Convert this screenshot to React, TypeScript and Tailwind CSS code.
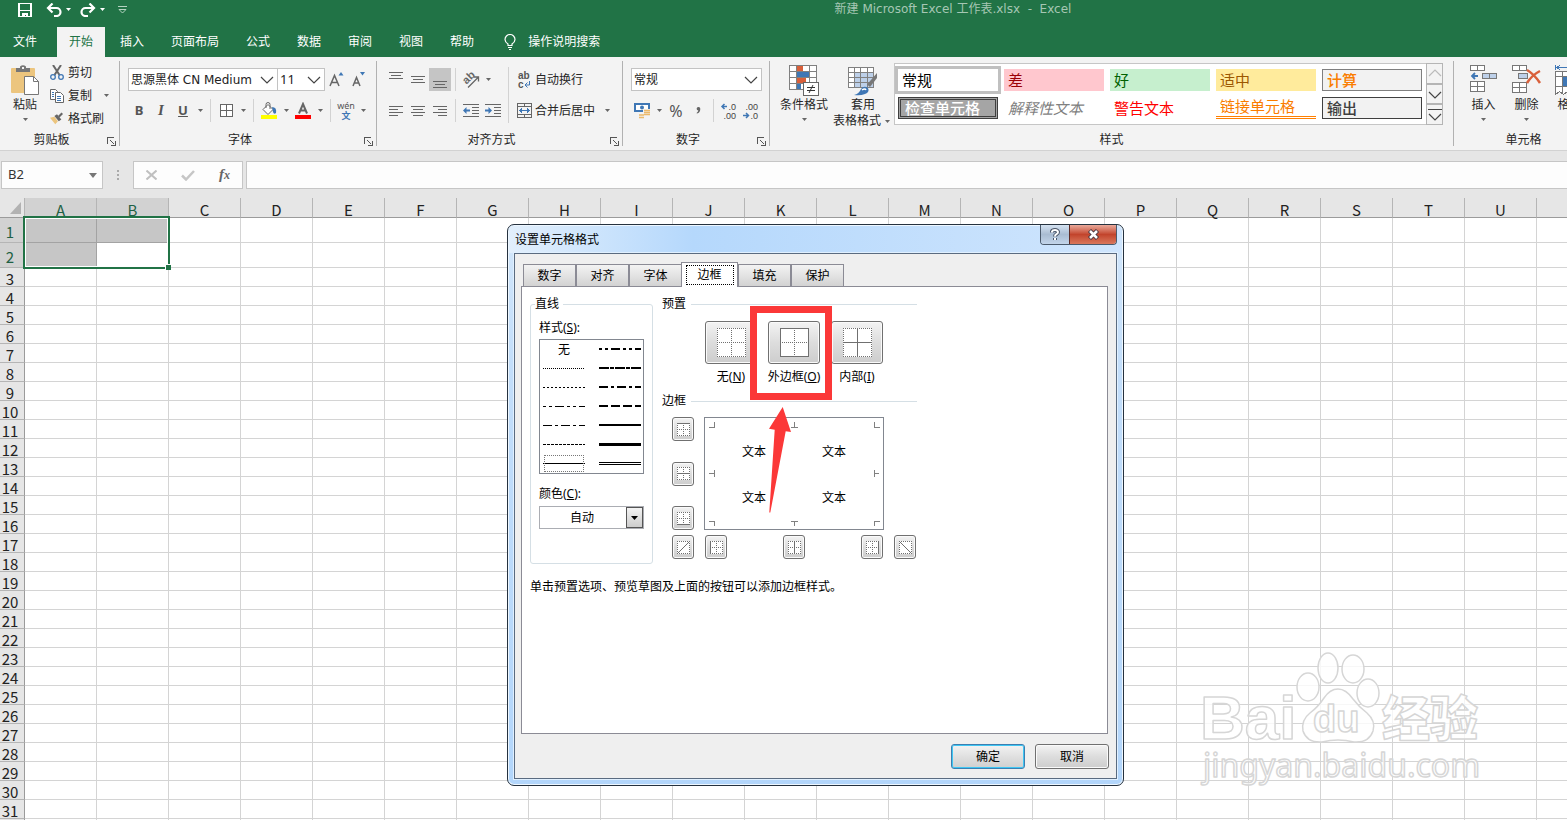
import { useState } from 'react'
import type { ReactNode } from 'react'

const ribbonTabs = ['开始', '插入', '页面布局', '公式', '数据', '审阅', '视图', '帮助']
const dialogTabs = ['数字', '对齐', '字体', '边框', '填充', '保护']
const columns = 'ABCDEFGHIJKLMNOPQRSTUV'.split('')
const rows = Array.from({ length: 32 }, (_, i) => i + 1)

const cellStyles = [
  { label: '常规', className: 'bg-white text-black outline-3 outline-[#c0c0c0]' },
  { label: '差', className: 'bg-[#ffc7ce] text-[#9c0006]' },
  { label: '好', className: 'bg-[#c6efce] text-[#006100]' },
  { label: '适中', className: 'bg-[#ffeb9c] text-[#9c5700]' },
  { label: '计算', className: 'border border-[#7f7f7f] bg-[#f2f2f2] font-medium text-[#fa7d00]' },
  { label: '检查单元格', className: 'border-3 border-double border-[#3f3f3f] bg-[#a5a5a5] font-medium text-white' },
  { label: '解释性文本', className: 'italic text-[#7f7f7f]' },
  { label: '警告文本', className: 'text-[#ff0000]' },
  { label: '链接单元格', className: 'border-b-3 border-double border-[#ff8001] text-[#fa7d00]' },
  { label: '输出', className: 'border border-[#3f3f3f] bg-[#f2f2f2] font-medium text-[#3f3f3f]' },
]

interface LineStyle {
  name: string
  dash?: string
  width?: number
  double?: boolean
}

// read left to right, top to bottom
const lineStyles: LineStyle[] = [
  { name: '无' },
  { name: '中双点划线', dash: '3 3 3 3 9 3', width: 2 },
  { name: '细点线', dash: '1 1', width: 1 },
  { name: '斜点划线', dash: '10 1 4 1', width: 2 },
  { name: '点线', dash: '2 2', width: 1 },
  { name: '中点划线', dash: '9 3 3 3', width: 2 },
  { name: '双点划线', dash: '3 3 3 3 9 3', width: 1 },
  { name: '中虚线', dash: '9 3', width: 2 },
  { name: '点划线', dash: '9 3 3 3', width: 1 },
  { name: '中实线', width: 2 },
  { name: '虚线', dash: '3 1', width: 1 },
  { name: '粗实线', width: 3 },
  { name: '细实线', width: 1 },
  { name: '双线', width: 1, double: true },
]

function Caret() {
  return (
    <span className="flex w-3 shrink-0 justify-center text-[#666]">
      <svg width="5" height="3" viewBox="0 0 5 3">
        <path d="M0 0h5L2.500 3z" fill="currentColor" />
      </svg>
    </span>
  )
}

function Chevron() {
  return (
    <svg width="14" height="8" viewBox="0 0 14 8" fill="none" stroke="#444" strokeWidth="1.2">
      <path d="M1 1l6 6 6-6" />
    </svg>
  )
}

function Separator() {
  return <span className="mx-1 h-full w-px shrink-0 bg-[#d2d2d2]" />
}

function ToolButton({ label, active, children }: { label: string; active?: boolean; children: ReactNode }) {
  return (
    <button
      aria-label={label}
      className={`flex h-[23px] w-[22px] shrink-0 items-center justify-center ${active ? 'bg-[#c5c5c5]' : ''}`}
    >
      {children}
    </button>
  )
}

function RibbonGroup({ title, width, launcher, children }: { title: string; width: string; launcher?: boolean; children: ReactNode }) {
  return (
    <section className={`flex shrink-0 flex-col border-r border-[#b1b1b1] ${width}`}>
      <div className="flex h-[72px]">{children}</div>
      <div className="flex flex-1 items-center pt-[2px]">
        <span className={`flex-1 text-center leading-none ${launcher ? 'pr-1' : ''}`}>{title}</span>
        {launcher && (
          <button aria-label={`${title}设置`} className="mr-[3px] mt-1">
            <svg width="9" height="9" viewBox="0 0 9 9" fill="none" stroke="#555" shapeRendering="crispEdges">
              <path d="M.5 7V.5H7M3 3l4 4M8.500 4v4.500H4" />
            </svg>
          </button>
        )}
      </div>
    </section>
  )
}

function RibbonSelect({ label, value, width }: { label: string; value: string; width: string }) {
  return (
    <span className={`relative flex h-[23px] items-center border border-[#c3c3c3] bg-white ${width}`}>
      <select aria-label={label} className="h-full w-full appearance-none pl-[2px] text-[#222] outline-none">
        <option>{value}</option>
      </select>
      <span className="pointer-events-none absolute right-[3px]">
        <Chevron />
      </span>
    </span>
  )
}

function LinesIcon({ lines, y }: { lines: [number, number][]; y: number }) {
  return (
    <svg width="16" height="16" viewBox="0 0 16 16" stroke="#666" shapeRendering="crispEdges">
      {lines.map(([from, to], i) => (
        <path key={i} d={`M${from} ${y + i * 3 + 0.5}H${to}`} />
      ))}
    </svg>
  )
}

function QuickAccess() {
  return (
    <div className="flex items-center pl-[18px] text-white">
      <button aria-label="保存">
        <svg width="14" height="14" viewBox="0 0 14 14" fill="none" stroke="currentColor" shapeRendering="crispEdges">
          <path d="M.5.5h13v13H.5zM1.500 1v12M12.500 1v12" />
          <path d="M1 7h12v1H1zM4 10h6v4H8v-2H7v2H4z" fill="currentColor" stroke="none" />
        </svg>
      </button>
      <button aria-label="撤消" className="ml-[14px]">
        <svg width="16" height="14" viewBox="0 0 16 14" fill="none" stroke="currentColor" strokeWidth="2.2">
          <path d="M2 5h8.500a4 4 0 0 1 0 8H8" />
          <path d="M6.500 0.500L2 5l4.500 4.500" />
        </svg>
      </button>
      <span className="[&_span]:text-white"><Caret /></span>
      <button aria-label="恢复" className="ml-1.5">
        <svg width="16" height="14" viewBox="0 0 16 14" fill="none" stroke="currentColor" strokeWidth="2.2">
          <path d="M14 5H5.500a4 4 0 0 0 0 8H8" />
          <path d="M9.500 0.500L14 5 9.500 9.500" />
        </svg>
      </button>
      <span className="[&_span]:text-white"><Caret /></span>
      <button aria-label="自定义快速访问工具栏" className="ml-2.5">
        <svg width="9" height="8" viewBox="0 0 9 8" fill="none" stroke="#b5d3c1">
          <path d="M0 .5h9M1 3.500h7L4.500 7z" />
        </svg>
      </button>
    </div>
  )
}

function PasteIcon() {
  return (
    <svg width="29" height="30" viewBox="0 0 29 30">
      <rect x="0" y="3" width="24" height="25" rx="1" fill="#ecc57e" />
      <path d="M5 7V3h4V1.500Q12 -1 15 1.500V3h4v4z" fill="#777" />
      <rect x="11" y="2" width="2" height="2" fill="#f3f3f3" />
      <path d="M13.500 11.500h9l5 5v13h-14z" fill="#fff" stroke="#777" />
      <path d="M22.500 11.500v5h5" fill="none" stroke="#777" />
    </svg>
  )
}

function ClipboardGroup() {
  return (
    <RibbonGroup title="剪贴板" width="w-[120px]" launcher>
      <button className="flex w-[50px] flex-col items-center pt-1">
        <PasteIcon />
        <span className="mt-[2px] leading-4">粘贴</span>
        <span className="mt-[5px]"><Caret /></span>
      </button>
      <div className="flex flex-col">
        <button className="flex h-[23px] items-center gap-1">
          <svg width="14" height="15" viewBox="0 0 14 15" fill="none">
            <path d="M3 0l6.500 10M11 0L4.500 10" stroke="#666" strokeWidth="2" />
            <circle cx="3" cy="12" r="2.300" stroke="#3f77b5" strokeWidth="1.300" />
            <circle cx="11" cy="12" r="2.300" stroke="#3f77b5" strokeWidth="1.300" />
          </svg>
          剪切
        </button>
        <button className="flex h-[23px] items-center gap-1">
          <svg width="14" height="14" viewBox="0 0 14 14" fill="#fff" stroke="#666">
            <path d="M.5.5h5l2 2v8h-7z" />
            <path d="M5.500 3.500h5l3 3v7h-8z" />
            <path d="M2 3.500h2M2 5.500h2M2 7.500h2M7 7.500h4M7 9.500h4M7 11.500h4" stroke="#3f77b5" />
          </svg>
          复制
          <span className="ml-1"><Caret /></span>
        </button>
        <button className="flex h-[23px] items-center gap-1">
          <svg width="14" height="13" viewBox="0 0 16 14">
            <path d="M0 6l5-1 4 5-3 3.500z" fill="#ecc57e" />
            <path d="M5 4l3-2 5 6-3 2z" fill="#666" />
            <path d="M10 5l4-4" stroke="#666" strokeWidth="2.500" />
          </svg>
          格式刷
        </button>
      </div>
    </RibbonGroup>
  )
}

function FontGroup() {
  return (
    <RibbonGroup title="字体" width="w-[257px]" launcher>
      <div className="flex flex-col gap-2 pl-2 pt-[7px]">
        <div className="flex items-center">
          <RibbonSelect label="字体" value="思源黑体 CN Medium" width="w-[150px] font-['DejaVu_Sans','Noto_Sans_CJK_SC',sans-serif]" />
          <span className="-ml-px">
            <RibbonSelect label="字号" value="11" width="w-12 text-[13px]" />
          </span>
          <ToolButton label="增大字号">
            <svg width="15" height="15" viewBox="0 0 15 15" fill="none" stroke="#666" strokeWidth="1.500">
              <path d="M1 14L5.500 3.500 10 14M2.800 10.500h5.500" />
              <path d="M9.500 3.500L12 0l2.500 3.500z" fill="#3f77b5" stroke="none" />
            </svg>
          </ToolButton>
          <ToolButton label="减小字号">
            <svg width="13" height="15" viewBox="0 0 13 15" fill="none" stroke="#666" strokeWidth="1.500">
              <path d="M1 14l3.500-8.500L8 14M2.500 11h4" />
              <path d="M8 0h5l-2.500 3.500z" fill="#3f77b5" stroke="none" />
            </svg>
          </ToolButton>
        </div>
        <div className="flex h-[23px] items-center text-[13px] text-[#555]">
          <ToolButton label="加粗"><b>B</b></ToolButton>
          <ToolButton label="倾斜"><b className="font-['Liberation_Serif'] text-[15px] italic">I</b></ToolButton>
          <ToolButton label="下划线"><b className="underline">U</b></ToolButton>
          <Caret />
          <Separator />
          <ToolButton label="边框">
            <svg width="13" height="13" viewBox="0 0 13 13" fill="#fff" stroke="#666" shapeRendering="crispEdges">
              <path d="M.5.5h12v12H.5zM6.500 0v13M0 6.500h13" />
            </svg>
          </ToolButton>
          <Caret />
          <Separator />
          <ToolButton label="填充颜色">
            <svg width="16" height="17" viewBox="0 0 16 17" fill="none">
              <path d="M7 2.500L12 7.500 7 12.500 2 7.500z" fill="#fff" stroke="#666" />
              <path d="M5 6V2.500a2 2 0 0 1 4 0V7" stroke="#666" />
              <path d="M11 5q5 0 4 6-2 2-3-1z" fill="#3f77b5" />
              <path d="M0 13h16v4H0z" fill="#ff0" />
            </svg>
          </ToolButton>
          <Caret />
          <ToolButton label="字体颜色">
            <svg width="16" height="17" viewBox="0 0 16 17" fill="none">
              <path d="M4 11.500L8 2l4 9.500M5.500 8.500h5" stroke="#666" strokeWidth="2" />
              <path d="M0 13h16v4H0z" fill="#f00" />
            </svg>
          </ToolButton>
          <Caret />
          <Separator />
          <ToolButton label="拼音">
            <span className="flex flex-col items-center text-[9px] leading-[10px]">
              wén
              <span className="text-[9px] font-bold text-[#3f77b5]">文</span>
            </span>
          </ToolButton>
          <Caret />
        </div>
      </div>
    </RibbonGroup>
  )
}

function IndentIcon({ flip }: { flip?: boolean }) {
  return (
    <svg width="16" height="14" viewBox="0 0 16 14" stroke="#666" shapeRendering="crispEdges">
      <path d="M0 .5h16M9 3.500h7M9 6.500h7M9 9.500h7M0 12.500h16" />
      <path
        d={flip ? 'M7 6.500L3.500 3v2.500H0v2h3.500V10z' : 'M0 6.500L3.500 3v2.500H7v2H3.500V10z'}
        fill="#3f77b5"
        stroke="none"
        shapeRendering="auto"
      />
    </svg>
  )
}

function AlignGroup() {
  return (
    <RibbonGroup title="对齐方式" width="w-[246px]" launcher>
      <div className="flex flex-col gap-2 pl-2 pt-[7px]">
        <div className="flex h-[23px] items-center">
          <ToolButton label="顶端对齐"><LinesIcon lines={[[1, 15], [3, 13], [1, 15]]} y={0} /></ToolButton>
          <ToolButton label="垂直居中"><LinesIcon lines={[[1, 15], [3, 13], [1, 15]]} y={4} /></ToolButton>
          <ToolButton label="底端对齐" active><LinesIcon lines={[[1, 15], [3, 13], [1, 15]]} y={9} /></ToolButton>
          <Separator />
          <ToolButton label="方向">
            <svg width="17" height="16" viewBox="0 0 17 16" className="overflow-visible" fill="none" stroke="#666">
              <text x="6" y="9" transform="rotate(-45 6 6)" textAnchor="middle" fontFamily="Liberation Sans, sans-serif" fontSize="11" fontWeight="bold" fill="#666" stroke="none">
                ab
              </text>
              <path d="M5 15.500L15 5.500M11 5h4.500v4.500" strokeWidth="1.300" />
            </svg>
          </ToolButton>
          <Caret />
        </div>
        <div className="flex h-[23px] items-center">
          <ToolButton label="左对齐"><LinesIcon lines={[[1, 15], [1, 10], [1, 15], [1, 10]]} y={3} /></ToolButton>
          <ToolButton label="居中"><LinesIcon lines={[[1, 15], [3, 13], [1, 15], [3, 13]]} y={3} /></ToolButton>
          <ToolButton label="右对齐"><LinesIcon lines={[[1, 15], [6, 15], [1, 15], [6, 15]]} y={3} /></ToolButton>
          <Separator />
          <ToolButton label="减少缩进量"><IndentIcon /></ToolButton>
          <ToolButton label="增加缩进量"><IndentIcon flip /></ToolButton>
        </div>
      </div>
      <div className="flex h-[62px] pt-1.5">
        <Separator />
      </div>
      <div className="flex flex-col gap-2 pt-[7px]">
        <button className="flex h-[23px] items-center">
          <span className="flex w-[22px] justify-center">
            <svg
              width="14"
              height="18"
              viewBox="0 0 14 18"
              className="overflow-visible"
              fill="none"
              fontFamily="Liberation Sans, sans-serif"
              fontSize="10"
              fontWeight="bold"
            >
              <text x="1" y="8" fill="#555">ab</text>
              <text x="1" y="17" fill="#555">c</text>
              <path d="M12.500 10v4H8M10.500 11.500l-2.500 2.500 2.500 2.500" stroke="#3f77b5" />
            </svg>
          </span>
          自动换行
        </button>
        <button className="flex h-[23px] items-center">
          <span className="flex w-[22px] justify-center">
            <svg width="15" height="15" viewBox="0 0 15 15" fill="none" stroke="#666" shapeRendering="crispEdges">
              <path d="M.5.5h14v14H.5zM0 3.500h15M0 11.500h15M7.500 0v3M7.500 12v3" />
              <path d="M3 7.500h9M5 5.500l-2 2 2 2M10 5.500l2 2-2 2" stroke="#3f77b5" />
            </svg>
          </span>
          合并后居中
          <span className="ml-1.5"><Caret /></span>
        </button>
      </div>
    </RibbonGroup>
  )
}

function DecimalIcon({ top, bottom, left }: { top: string; bottom: string; left?: boolean }) {
  return (
    <svg
      width="16"
      height="18"
      viewBox="0 0 16 18"
      className="overflow-visible"
      fill="#444"
      fontFamily="Liberation Sans, sans-serif"
      fontSize="9"
    >
      <text x="15" y="8" textAnchor="end">{top}</text>
      <text x="15" y="17" textAnchor="end">{bottom}</text>
      <path
        d={left ? 'M1 4.500h5M3.500 2L1 4.500 3.500 7' : 'M0 13.500h5M3 11l2.500 2.500L3 16'}
        fill="none"
        stroke="#3f77b5"
        strokeWidth="1.500"
      />
    </svg>
  )
}

function NumberGroup() {
  return (
    <RibbonGroup title="数字" width="w-[147px]" launcher>
      <div className="flex flex-col gap-2 pl-2 pt-[7px]">
        <RibbonSelect label="数字格式" value="常规" width="w-[131px]" />
        <div className="flex h-[23px] items-center text-[#555]">
          <ToolButton label="会计数字格式">
            <svg width="17" height="16" viewBox="0 0 17 16" fill="none">
              <path d="M1 1h14v7H1z" fill="#fff" stroke="#3f77b5" strokeWidth="2" />
              <circle cx="8" cy="4.500" r="2" fill="#3f77b5" />
              <path d="M9 6h8v9H4v-4h5z" fill="#f3f3f3" />
              <path d="M10 7.500h6M10 9.500h6M10 11.500h6M5 12h5M5 14.500h5" stroke="#ecb96a" strokeWidth="1.600" />
            </svg>
          </ToolButton>
          <Caret />
          <ToolButton label="百分比样式"><span className="text-base">%</span></ToolButton>
          <ToolButton label="千位分隔样式">
            <svg width="5" height="7" viewBox="0 0 6 9" fill="#666">
              <path d="M3 0a2.300 2.300 0 0 1 2.300 2.500Q5.300 7 1 8.500L.5 7.700Q2.500 6.500 2.800 4.600A2.300 2.300 0 0 1 3 0z" />
            </svg>
          </ToolButton>
          <Separator />
          <ToolButton label="增加小数位数"><DecimalIcon top=".0" bottom=".00" left /></ToolButton>
          <ToolButton label="减少小数位数"><DecimalIcon top=".00" bottom=".0" /></ToolButton>
        </div>
      </div>
    </RibbonGroup>
  )
}

function StylesGroup() {
  return (
    <RibbonGroup title="样式" width="w-[684px]">
      <button className="ml-[5px] flex w-[58px] shrink-0 flex-col items-center pt-1">
        <svg width="30" height="31" viewBox="0 0 30 31" fill="none" shapeRendering="crispEdges">
          <path d="M.5.5h27v24H.5z" fill="#fff" />
          <path d="M8 1h6v6H8zM8 13h9v6H8z" fill="#d9603b" />
          <path d="M8 7h12v6H8zM8 19h4v6H8z" fill="#3f77b5" />
          <path d="M.5.5h27v24H.5zM0 6.500h28M0 12.500h28M0 18.500h28M7.500 0v25M20.500 0v25" stroke="#808080" />
          <path d="M14.500 17.500h15v13h-15z" fill="#fff" stroke="#666" />
          <path d="M18 22.500h8M18 25.500h8M24 20l-4 8" stroke="#333" shapeRendering="auto" />
        </svg>
        <span className="mt-px leading-4">条件格式</span>
        <span className="mt-[5px]"><Caret /></span>
      </button>
      <button className="flex w-[60px] shrink-0 flex-col items-center pt-1">
        <svg width="30" height="31" viewBox="0 0 30 31" fill="none">
          <path d="M.5 2.500h25v20H.5z" fill="#fff" />
          <path d="M7 8h18v14H7z" fill="#bdd0e9" />
          <path d="M.5 2.500h25v20H.5zM0 7.500h26M0 12.500h26M0 17.500h26M6.500 2v21M12.500 2v21M19.500 2v21" stroke="#808080" shapeRendering="crispEdges" />
          <path d="M29 8v5l-7 9-3-2.500z" fill="#777" />
          <path d="M6 30q5-1 7-6 3-4 7-1 2 4-3 6-5 2-11 1z" fill="#3f77b5" />
          <path d="M14 25q3-2 4 0" stroke="#fff" strokeWidth="1.500" />
        </svg>
        <span className="mt-px leading-4">套用</span>
        <span className="flex items-center leading-4">
          表格格式
          <Caret />
        </span>
      </button>
      <div className="ml-px mt-0.5 flex h-[62px] border border-[#c6c6c6] bg-white">
        <div className="grid grid-cols-[repeat(5,100px)] grid-rows-[22px_22px] gap-1.5 pl-[3px] pr-1 pt-[5px] text-[15px]">
          {cellStyles.map((style) => (
            <button key={style.label} className={`flex items-center pl-1 leading-none ${style.className}`}>
              {style.label}
            </button>
          ))}
        </div>
        <div className="-my-px -mr-px flex w-[17px] flex-col text-[#444]">
          {['M1 9l6-6 6 6', 'M1 4l6 6 6-6', 'M0 .5h14M1 5l6 6 6-6'].map((d, i) => (
            <button key={d} aria-label="样式库滚动" className={`flex flex-1 items-center justify-center border border-[#b5b5b5] bg-[#f3f3f3] ${i === 0 ? 'text-[#bbb]' : ''}`}>
              <svg width="14" height="12" viewBox="0 0 14 12" fill="none" stroke="currentColor" strokeWidth="1.200">
                <path d={d} />
              </svg>
            </button>
          ))}
        </div>
      </div>
    </RibbonGroup>
  )
}

function CellsGroup() {
  const small = 'M.5.5h14v5H.5zM7.500 0v6'
  return (
    <RibbonGroup title="单元格" width="w-[140px]">
      <button className="ml-2 flex w-[43px] flex-col items-center pt-1">
        <svg width="27" height="30" viewBox="0 0 27 30" fill="#fff" stroke="#777" shapeRendering="crispEdges">
          <path d={small} />
          <path d="M12.500 8.500h14v5h-14zM19.500 8v6" fill="#bdd0e9" />
          <path d="M.5 16.500h14v10H.5zM7.500 16v11M0 21.500h15" />
          <path d="M8 11H2M5 8l-3 3 3 3" stroke="#3f77b5" strokeWidth="1.800" fill="none" shapeRendering="auto" />
        </svg>
        <span className="mt-[2px] leading-4">插入</span>
        <span className="mt-[5px]"><Caret /></span>
      </button>
      <button className="flex w-[43px] flex-col items-center pt-1">
        <svg width="30" height="30" viewBox="0 0 30 30" fill="#fff" stroke="#777" shapeRendering="crispEdges">
          <path d={small} />
          <path d="M6.500 8.500h9v5h-9z" fill="#bdd0e9" />
          <path d="M.5 17.500h14v10H.5zM7.500 17v11M0 22.500h15" />
          <path d="M15 5q7 4 13 13M28 6q-8 4-13 12" stroke="#d9603b" strokeWidth="2.500" fill="none" shapeRendering="auto" />
        </svg>
        <span className="mt-[2px] leading-4">删除</span>
        <span className="mt-[5px]"><Caret /></span>
      </button>
      <button className="flex w-[43px] flex-col items-center pt-1">
        <svg width="30" height="30" viewBox="0 0 30 30" fill="#fff" stroke="#777" shapeRendering="crispEdges">
          <path d="M.5 6.500h28v20l-4 3-4-3-4 3-4-3-4 3-4-3-4 3z" />
          <path d="M0 11.500h29M0 21.500h29M7.500 6v23M20.500 6v23" />
          <path d="M8 12h12v9H8z" fill="#3f77b5" stroke="none" />
          <path d="M.5 0v5M2 2.500h26M5 0L2 2.500 5 5" stroke="#3f77b5" fill="none" />
        </svg>
        <span className="mt-[2px] leading-4">格式</span>
        <span className="mt-[5px]"><Caret /></span>
      </button>
    </RibbonGroup>
  )
}

function FormulaBar() {
  return (
    <div className="flex h-[47px] shrink-0 items-start bg-[#e6e6e6] pl-px pt-[10px]">
      <div className="flex h-7 w-[102px] items-center border border-[#c6c6c6] bg-[#fdfdfd] pr-[5px]">
        <input aria-label="名称框" defaultValue="B2" className="w-full min-w-0 bg-transparent pl-1.5 text-[13px] text-[#333] outline-none" />
        <svg width="8" height="5" viewBox="0 0 8 5" className="shrink-0">
          <path d="M0 0h8L4 5z" fill="#777" />
        </svg>
      </div>
      <div className="flex h-7 w-[30px] items-center justify-center">
        <svg width="2" height="11" viewBox="0 0 2 11" fill="#aaa" shapeRendering="crispEdges">
          <path d="M0 0h2v2H0zM0 4h2v2H0zM0 8h2v2H0z" />
        </svg>
      </div>
      <div className="flex h-7 w-[110px] items-center justify-around border border-[#c6c6c6] bg-[#fdfdfd]">
        <button aria-label="取消输入">
          <svg width="11" height="10" viewBox="0 0 11 10" stroke="#c0c0c0" strokeWidth="2">
            <path d="M.5.5l10 9M10.500.5l-10 9" />
          </svg>
        </button>
        <button aria-label="输入">
          <svg width="14" height="11" viewBox="0 0 14 11" fill="none" stroke="#c6c6c6" strokeWidth="2.500">
            <path d="M1 5.500L5 9.500 13 1" />
          </svg>
        </button>
        <button aria-label="插入函数" className="font-['Liberation_Serif'] text-[15px] font-bold italic leading-none text-[#666]">
          f<span className="text-xs">x</span>
        </button>
      </div>
      <input aria-label="编辑栏" className="ml-[3px] h-7 min-w-0 flex-1 border border-r-0 border-[#c6c6c6] bg-[#fdfdfd] px-2 outline-none" />
    </div>
  )
}

function Sheet() {
  return (
    <div className="relative min-h-0 flex-1 overflow-hidden bg-white">
      <table className="w-[1609px] table-fixed border-separate border-spacing-0 text-center font-['Noto_Sans_CJK_SC',sans-serif] text-[15px] leading-none">
        <colgroup>
          <col className="w-[25px]" />
          {columns.map((col) => (
            <col key={col} className="w-[72px]" />
          ))}
        </colgroup>
        <thead>
          <tr className="h-5">
            <th className="border-b border-r border-[#9b9b9b] border-r-[#b5b5b5] bg-[#e6e6e6] p-0">
              <svg width="21" height="12" viewBox="0 0 21 12">
                <path d="M21 0v12H10z" fill="#b2b2b2" />
              </svg>
            </th>
            {columns.map((col, i) => (
              <th
                key={col}
                className={`border-b border-r border-[#9b9b9b] border-r-[#b5b5b5] p-0 pt-[3px] font-normal ${i < 2 ? 'bg-[#d2d2d2] text-[#1f6145]' : 'bg-[#e6e6e6] text-[#222]'}`}
              >
                {col}
              </th>
            ))}
          </tr>
        </thead>
        <tbody>
          {rows.map((row) => (
            <tr key={row} className={row < 3 ? 'h-[25px]' : 'h-[19px]'}>
              <th
                className={`border-b border-r border-[#b5b5b5] border-r-[#9b9b9b] p-0 pr-1 pt-[3px] font-normal ${row < 3 ? 'bg-[#d2d2d2] text-[#1f6145]' : 'bg-[#e6e6e6] text-[#222]'}`}
              >
                {row}
              </th>
              {columns.map((col) => {
                const selected = (row === 1 && (col === 'A' || col === 'B')) || (row === 2 && col === 'A')
                return (
                  <td
                    key={col}
                    className={`border-b border-r p-0 ${selected ? 'border-[#a3a3a3] bg-[#c6c6c6]' : 'border-[#d4d4d4]'}`}
                  />
                )
              })}
            </tr>
          ))}
        </tbody>
      </table>
      {/* selection frame over A1:B2 */}
      <div className="pointer-events-none absolute left-[23px] top-[18px] h-[53px] w-[147px] border-2 border-[#217346]">
        <div className="h-full w-full border border-white" />
        <span className="absolute -bottom-[3px] -right-[3px] h-1.5 w-1.5 border-l border-t border-white bg-[#217346]" />
      </div>
    </div>
  )
}

type Edge = 'top' | 'middle' | 'bottom' | 'left' | 'center' | 'right' | 'up' | 'down'

// square drawn with dotted guides, solid where an edge is listed
function BorderGlyph({ size, solid }: { size: number; solid: Edge[] }) {
  const end = size - 0.5
  const mid = size / 2
  const paths: Record<Edge, string> = {
    top: `M0 .5H${size}`,
    middle: `M0 ${mid}H${size}`,
    bottom: `M0 ${end}H${size}`,
    left: `M.5 0V${size}`,
    center: `M${mid} 0V${size}`,
    right: `M${end} 0V${size}`,
    up: `M1 ${size - 1}L${size - 1} 1`,
    down: `M1 1L${size - 1} ${size - 1}`,
  }
  const diagonal = solid.includes('up') || solid.includes('down')
  const guides: Edge[] = diagonal
    ? ['top', 'bottom', 'left', 'right']
    : ['top', 'middle', 'bottom', 'left', 'center', 'right']
  return (
    <svg width={size} height={size} viewBox={`0 0 ${size} ${size}`} fill="none" stroke="#707070">
      <rect width={size} height={size} fill="#fff" stroke="none" />
      {guides.filter((edge) => !solid.includes(edge)).map((edge) => (
        <path key={edge} d={paths[edge]} strokeDasharray="1 1" shapeRendering="crispEdges" />
      ))}
      {solid.map((edge) => (
        <path key={edge} d={paths[edge]} shapeRendering={diagonal ? 'auto' : 'crispEdges'} />
      ))}
    </svg>
  )
}

const aeroButton =
  'rounded-[3px] border border-[#707070] bg-linear-to-b from-[#f3f3f3] from-0% via-[#dddddd] via-50% to-[#cdcdcd] shadow-[inset_0_0_0_1px_#fafafa]'

function EdgeButton({ label, solid }: { label: string; solid: Edge[] }) {
  return (
    <button aria-label={label} className={`flex h-6 w-[22px] items-center justify-center ${aeroButton}`}>
      <BorderGlyph size={13} solid={solid} />
    </button>
  )
}

function PresetButton({ name, hotkey, solid }: { name: string; hotkey: string; solid: Edge[] }) {
  return (
    <label className="flex w-[52px] flex-col items-center gap-[5px] whitespace-nowrap">
      <button className={`flex h-[43px] w-[52px] shrink-0 items-center justify-center ${aeroButton}`}>
        <BorderGlyph size={29} solid={solid} />
      </button>
      <span className="leading-4">
        {name}(<u>{hotkey}</u>)
      </span>
    </label>
  )
}

function SectionTitle({ children }: { children: ReactNode }) {
  return (
    <div className="flex h-4 items-center gap-[5px] leading-4">
      {children}
      <span className="h-px flex-1 bg-[#d5dfe5]" />
    </div>
  )
}

function LineStyleItem({ style, selected }: { style: LineStyle; selected: boolean }) {
  return (
    <button
      aria-label={style.name}
      className={`flex h-[19px] w-[42px] items-center justify-center ${selected ? 'outline-1 -outline-offset-2 outline-dotted outline-[#777]' : ''}`}
    >
      {style.width ? (
        <svg width="42" height="5" viewBox="0 0 42 5" stroke="#000" shapeRendering="crispEdges">
          {style.double ? (
            <path d="M0 1.500h42M0 3.500h42" />
          ) : (
            <path d={style.width === 2 ? 'M0 2h42' : 'M0 2.500h42'} strokeWidth={style.width} strokeDasharray={style.dash} />
          )}
        </svg>
      ) : (
        '无'
      )}
    </button>
  )
}

function BorderPanel() {
  return (
    <div className="flex flex-col pl-2 pt-[9px]">
      <div className="flex gap-[9px]">
        <fieldset className="h-[268px] w-[122px] rounded-[3px] border border-[#d5dfe5] px-2">
          <legend className="-ml-1 pr-1 leading-4">直线</legend>
          <p className="mt-2 leading-4">
            样式(<u>S</u>):
          </p>
          <div className="mt-[3px] grid w-[105px] grid-cols-[42px_42px] gap-x-[14px] border border-[#828790] px-[3px]">
            {lineStyles.map((style) => (
              <LineStyleItem key={style.name} style={style} selected={style.name === '细实线'} />
            ))}
          </div>
          <label htmlFor="border-color" className="mt-3 block leading-4">
            颜色(<u>C</u>):
          </label>
          <div className="mt-1 flex h-[23px] w-[105px] items-center border border-[#abadb3] bg-white">
            <div className="relative flex h-full w-full items-center">
              <select id="border-color" className="h-full w-full appearance-none pl-[30px] outline-none">
                <option>自动</option>
              </select>
              <span className="pointer-events-none absolute right-0 flex h-[21px] w-[17px] items-center justify-center border border-[#555] bg-linear-to-b from-[#f3f3f3] to-[#cdcdcd]">
                <svg width="7" height="4" viewBox="0 0 7 4">
                  <path d="M0 0h7L3.500 4z" />
                </svg>
              </span>
            </div>
          </div>
        </fieldset>
        <div className="flex w-[255px] flex-col">
          <SectionTitle>预置</SectionTitle>
          <div className="mt-[9px] flex gap-[11px] pl-[43px]">
            <PresetButton name="无" hotkey="N" solid={[]} />
            <PresetButton name="外边框" hotkey="O" solid={['top', 'bottom', 'left', 'right']} />
            <PresetButton name="内部" hotkey="I" solid={['middle', 'center']} />
          </div>
          <div className="mt-2">
            <SectionTitle>边框</SectionTitle>
          </div>
          <div className="mt-2 flex gap-[10px] pl-[10px]">
            <div className="flex flex-col justify-between">
              <EdgeButton label="上边框" solid={['top']} />
              <EdgeButton label="水平内边框" solid={['middle']} />
              <EdgeButton label="下边框" solid={['bottom']} />
            </div>
            <div className="relative grid h-[113px] w-[180px] grid-cols-2 grid-rows-[46px_46px] place-items-center border border-[#828790] px-[9px] pt-[11px]">
              {[0, 1, 2, 3].map((cell) => (
                <span key={cell}>文本</span>
              ))}
              <svg className="absolute left-0 top-0" width="178" height="111" viewBox="0 0 178 111" fill="none" stroke="#808080" shapeRendering="crispEdges">
                <path d="M4 9.500h5.500V4M89.500 4v5M86 9.500h7M169.500 4v5.500h5" />
                <path d="M4 55.500h5M9.500 52v7M169.500 52v7M170 55.500h4" />
                <path d="M4 103.500h5.500v4M86 103.500h7M89.500 103v5M169.500 108v-4.500h5" />
              </svg>
            </div>
          </div>
          <div className="mt-[5px] flex gap-[11px] pl-[10px]">
            <EdgeButton label="左斜线" solid={['up']} />
            <div className="flex w-[178px] justify-between">
              <EdgeButton label="左边框" solid={['left']} />
              <EdgeButton label="垂直内边框" solid={['center']} />
              <EdgeButton label="右边框" solid={['right']} />
            </div>
            <EdgeButton label="右斜线" solid={['down']} />
          </div>
        </div>
      </div>
      <p className="mt-[15px] leading-4">单击预置选项、预览草图及上面的按钮可以添加边框样式。</p>
    </div>
  )
}

function FormatCellsDialog() {
  const [tab, setTab] = useState('边框')

  return (
    <div
      role="dialog"
      aria-label="设置单元格格式"
      className="absolute left-[507px] top-[224px] flex h-[562px] w-[617px] flex-col rounded-[7px] border border-[#26323f] bg-linear-to-b from-[#d3e7fb] via-[#c3defa] via-25% to-[#b3d6fb] px-1.5 pb-1.5 text-black shadow-[inset_0_0_0_1px_#eef7ff]"
    >
      <header className="-mx-[5px] mt-px flex h-[27px] shrink-0 items-center rounded-t-[5px] bg-linear-to-r from-[#e2effc] via-[#b5d8fc] via-30% to-[#cfe5fd] pl-1.5">
        设置单元格格式
      </header>
      <div className="absolute right-1.5 top-0 flex h-5 overflow-hidden rounded-b-[4px] border border-t-0 border-[#4b5a6c]">
        <button aria-label="帮助" className="flex w-7 items-center justify-center bg-linear-to-b from-[#d5e3f2] via-[#a9bcd2] via-50% to-[#c3d5ea]">
          <svg width="10" height="13" viewBox="0 0 10 13" fill="none">
            <path d="M2 4.500V3.500Q2.500 2 5 2t3 2q0 1.500-1.500 2.200Q5 7 5 8.500M5 10v2" stroke="#4a5568" strokeWidth="4" />
            <path d="M2 4.500V3.500Q2.500 2 5 2t3 2q0 1.500-1.500 2.200Q5 7 5 8.500M5 10v2" stroke="#fff" strokeWidth="2" />
          </svg>
        </button>
        <button aria-label="关闭" className="flex w-[47px] items-center justify-center border-l border-[#5d2a24] bg-linear-to-b from-[#e9a99b] via-[#c2442c] via-50% to-[#d9775c]">
          <svg width="13" height="11" viewBox="0 0 13 11" fill="none">
            <path d="M2.500 1.500l8 8M10.500 1.500l-8 8" stroke="#4a3b45" strokeWidth="4.500" />
            <path d="M3 2l7 7M10 2L3 9" stroke="#fff" strokeWidth="2.500" />
          </svg>
        </button>
      </div>
      <div className="flex flex-1 flex-col border border-[#5a6b80] bg-[#efefef] pl-1.5 pr-2 pt-2 shadow-[0_0_0_1px_#e0f0ff]">
        <div role="tablist" className="relative z-10 -mb-px ml-0.5 flex h-[25px] items-end">
          {dialogTabs.map((name) => (
            <button
              key={name}
              role="tab"
              aria-selected={tab === name}
              onClick={() => setTab(name)}
              className={
                tab === name
                  ? '-ml-px flex h-[25px] w-[57px] items-center justify-center border border-b-0 border-[#8b8b95] bg-white'
                  : 'flex h-[23px] w-[53px] items-center justify-center border border-[#8b8b95] bg-linear-to-b from-[#f3f3f3] via-[#e3e3e3] via-50% to-[#d2d2d2]'
              }
            >
              {tab === name ? (
                <span className="flex h-5 w-12 items-center justify-center border border-dotted border-black">{name}</span>
              ) : (
                name
              )}
            </button>
          ))}
        </div>
        <div role="tabpanel" className="h-[448px] border border-[#8b8b95] bg-white">
          <BorderPanel />
        </div>
        <div className="-mr-px mt-[10px] flex justify-end gap-[10px]">
          <button className="h-[25px] w-[74px] rounded-[3px] border border-[#3c7fb1] bg-linear-to-b from-[#f3f3f3] via-[#e0e0e0] via-50% to-[#cfcfcf] shadow-[inset_0_0_0_1px_#3fc6f3]">
            确定
          </button>
          <button className={`h-[25px] w-[74px] ${aeroButton}`}>取消</button>
        </div>
      </div>
    </div>
  )
}

function Watermark() {
  return (
    <svg
      className="pointer-events-none absolute left-[1195px] top-[645px]"
      width="300"
      height="145"
      viewBox="0 0 300 145"
      fill="#fff"
      fillOpacity="0.8"
      stroke="#d6d6d6"
      strokeWidth="1.500"
      strokeLinejoin="round"
    >
      <g>
        <ellipse cx="113" cy="42" rx="11" ry="14" />
        <ellipse cx="133" cy="23" rx="10" ry="15" />
        <ellipse cx="158" cy="24" rx="11" ry="14" />
        <ellipse cx="173" cy="48" rx="11" ry="14" />
        <path d="M143 44q8 0 15 10 6 8 14 14 9 8 6 18-4 12-19 11-8-2-16-2t-16 2q-15 1-19-11-2-11 7-18 8-6 14-15 6-9 14-9z" />
      </g>
      <g fontFamily="Liberation Sans, sans-serif" fontSize="62" fontWeight="bold">
        <text x="5" y="94">Bai</text>
        <text x="118" y="87" fontSize="38">du</text>
      </g>
      <text x="187" y="91" fontFamily="Noto Sans CJK SC, sans-serif" fontSize="48" fontWeight="900">经验</text>
      <text x="8" y="132" fontFamily="Noto Sans, sans-serif" fontSize="32">jingyan.baidu.com</text>
    </svg>
  )
}

function Callout() {
  return (
    <>
      <div className="pointer-events-none absolute left-[750px] top-[306px] h-[94px] w-[82px] border-7 border-[#fb3838]" />
      <svg className="pointer-events-none absolute left-[768px] top-[407px]" width="24" height="106" viewBox="0 0 24 106">
        <path d="M14.700 0L1 21.700l5.700 1L1.300 105.500h1L17.700 24.300l5.300.7z" fill="#fb3838" />
      </svg>
    </>
  )
}

export default function App() {
  const [activeTab, setActiveTab] = useState('开始')

  return (
    <div className="relative flex h-screen flex-col overflow-hidden bg-[#e6e6e6] font-['Noto_Sans','Noto_Sans_CJK_SC',sans-serif] text-xs text-[#262626]">
      <header className="shrink-0 bg-[#217346]">
        <div className="flex h-[27px] items-start">
          <div className="flex h-[19px]"><QuickAccess /></div>
          <h1 className="flex-1 whitespace-pre pl-[212px] text-center font-['DejaVu_Sans','Noto_Sans_CJK_SC',sans-serif] leading-[18px] text-[#a6c7b4]">
            {'新建 Microsoft Excel 工作表.xlsx  -  Excel'}
          </h1>
        </div>
        <nav className="flex h-[30px] items-stretch text-white">
          <button className="w-[57px] pl-[13px] text-left">文件</button>
          <div className="flex gap-[3px]">
            {ribbonTabs.map((name) => (
              <button
                key={name}
                onClick={() => setActiveTab(name)}
                className={`px-3 ${activeTab === name ? 'bg-[#f3f3f3] text-[#217346]' : ''}`}
              >
                {name}
              </button>
            ))}
          </div>
          <button className="ml-[18px] flex items-center gap-3">
            <svg width="12" height="16" viewBox="0 0 12 16" fill="none" stroke="currentColor" strokeWidth="1.200">
              <path d="M4 11.500V10Q1 8 1 5.500a5 5 0 0 1 10 0Q11 8 8 10v1.500zM4 13.500h4M5 15.500h2" />
            </svg>
            操作说明搜索
          </button>
        </nav>
      </header>
      <div className="flex h-[94px] shrink-0 border-b border-[#d2d2d2] bg-[#f3f3f3] py-1">
        <ClipboardGroup />
        <FontGroup />
        <AlignGroup />
        <NumberGroup />
        <StylesGroup />
        <CellsGroup />
      </div>
      <FormulaBar />
      <Sheet />
      <FormatCellsDialog />
      <Callout />
      <Watermark />
    </div>
  )
}
